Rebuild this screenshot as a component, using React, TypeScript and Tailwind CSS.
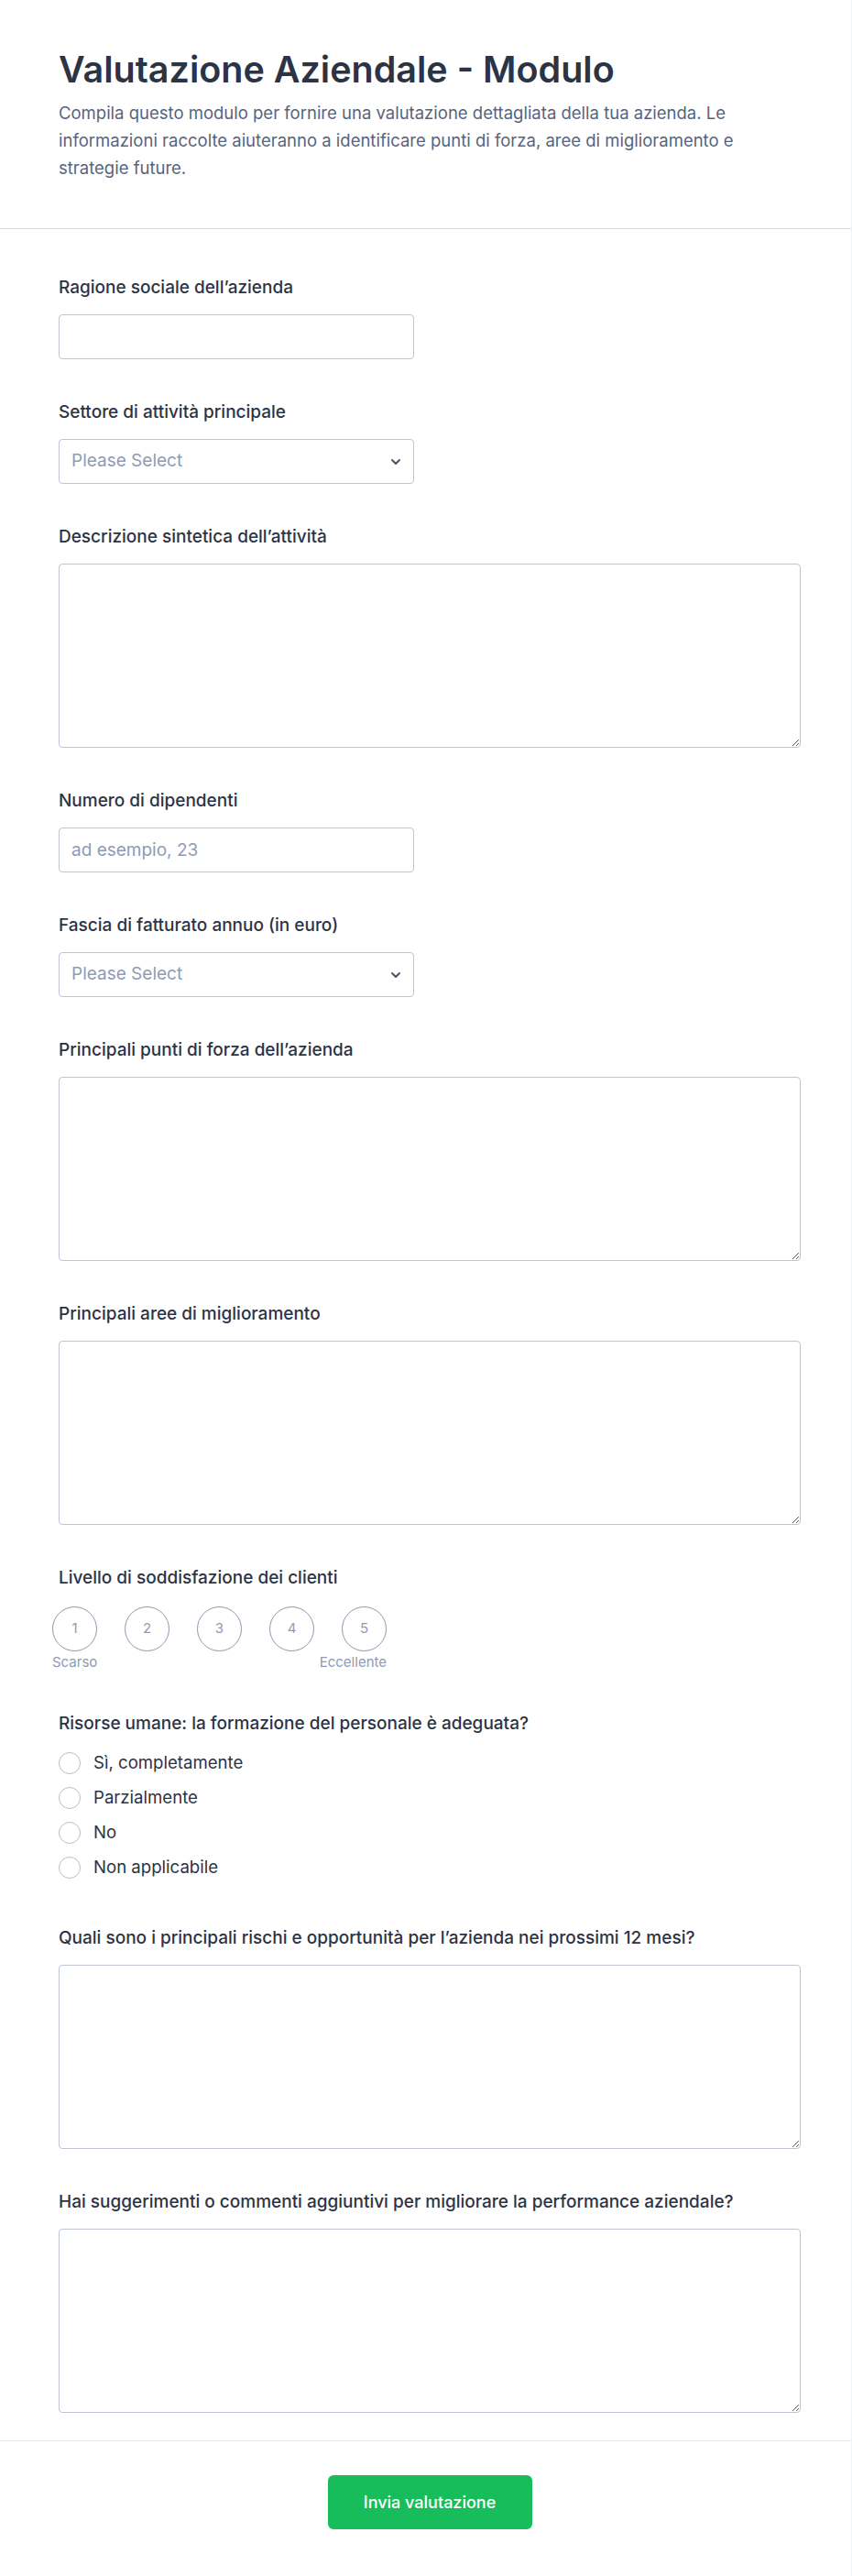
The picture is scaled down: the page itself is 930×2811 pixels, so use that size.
import { ChevronDown } from "lucide-react";

const font = { fontFamily: "Inter, 'Noto Sans', sans-serif" };

const labelCls = "block text-[19px] leading-[27px] font-medium text-[#2c3345] mb-4";
const boxCls =
  "w-[388px] h-[49px] border border-[#bfc5d2] rounded-[4px] bg-white px-[13px] text-[19px] text-[#2c3345] placeholder:text-[#8f9bb3] outline-none";
const areaCls =
  "block w-full h-[201px] border border-[#bfc5d2] rounded-[4px] bg-white px-[13px] py-[10px] text-[19px] text-[#2c3345] outline-none";

function Field({ label, children }: { label: string; children: React.ReactNode }) {
  return (
    <div>
      <label className={labelCls}>{label}</label>
      {children}
    </div>
  );
}

function SelectBox() {
  return (
    <div className="relative w-[388px]">
      <select defaultValue="" className={`${boxCls} appearance-none text-[#8f9bb3]`}>
        <option value="" disabled>
          Please Select
        </option>
      </select>
      <ChevronDown
        className="absolute right-[12px] top-[17px] w-[16px] h-[16px] text-[#4b5568] pointer-events-none"
        strokeWidth={3}
      />
    </div>
  );
}

const radios = ["Sì, completamente", "Parzialmente", "No", "Non applicabile"];

export default function App() {
  return (
    <div className="min-h-[2811px] bg-white border-r border-[#eef0f4]" style={font}>
      <header className="pl-[64px] pr-[55px] pt-[52px] pb-[51px] border-b border-[#d9dbe3]">
        <h1 className="text-[39.5px] leading-[48px] font-semibold text-[#2c3345]">
          Valutazione Aziendale - Modulo
        </h1>
        <p className="mt-[8px] max-w-[805px] text-[18.5px] leading-[30px] text-[#57647e]">
          Compila questo modulo per fornire una valutazione dettagliata della tua azienda. Le
          informazioni raccolte aiuteranno a identificare punti di forza, aree di miglioramento e
          strategie future.
        </p>
      </header>

      <form className="pl-[64px] pr-[55px] pt-[50px] pb-[30px] flex flex-col gap-[44px]">
        <Field label="Ragione sociale dell’azienda">
          <input className={boxCls} />
        </Field>

        <Field label="Settore di attività principale">
          <SelectBox />
        </Field>

        <Field label="Descrizione sintetica dell’attività">
          <textarea className={areaCls} />
        </Field>

        <Field label="Numero di dipendenti">
          <input className={boxCls} placeholder="ad esempio, 23" />
        </Field>

        <Field label="Fascia di fatturato annuo (in euro)">
          <SelectBox />
        </Field>

        <Field label="Principali punti di forza dell’azienda">
          <textarea className={areaCls} />
        </Field>

        <Field label="Principali aree di miglioramento">
          <textarea className={areaCls} />
        </Field>

        <div>
          <label className="block text-[19px] leading-[27px] font-medium text-[#2c3345] mb-[18px]">
            Livello di soddisfazione dei clienti
          </label>
          <div className="w-[365px] -ml-[7px]">
            <div className="flex gap-[30px]">
              {[1, 2, 3, 4, 5].map((n) => (
                <div
                  key={n}
                  className="w-[49px] h-[49px] rounded-full border border-[#8e97ad] flex items-center justify-center text-[15px] text-[#8f9bb3]"
                >
                  {n}
                </div>
              ))}
            </div>
            <div className="mt-[3px] flex justify-between text-[15px] leading-[18px] text-[#8f9bb3]">
              <span>Scarso</span>
              <span>Eccellente</span>
            </div>
          </div>
        </div>

        <div className="mb-[6px]">
          <label className={labelCls}>
            Risorse umane: la formazione del personale è adeguata?
          </label>
          <div className="flex flex-col gap-[11px]">
            {radios.map((r) => (
              <div key={r} className="flex items-center gap-[14px] h-[27px]">
                <span className="w-[24px] h-[24px] rounded-full border border-[#b8bdc9] bg-white" />
                <span className="text-[18.6px] leading-[27px] text-[#2c3345]">{r}</span>
              </div>
            ))}
          </div>
        </div>

        <Field label="Quali sono i principali rischi e opportunità per l’azienda nei prossimi 12 mesi?">
          <textarea className={areaCls} />
        </Field>

        <Field label="Hai suggerimenti o commenti aggiuntivi per migliorare la performance aziendale?">
          <textarea className={areaCls} />
        </Field>
      </form>

      <footer className="border-t border-[#e3e8f4] pl-[64px] pr-[55px] pt-[37px] pb-[50px] flex justify-center">
        <button
          type="button"
          className="w-[223px] h-[59px] rounded-[6px] bg-[#18bd5b] text-white text-[18px] font-medium"
        >
          Invia valutazione
        </button>
      </footer>
    </div>
  );
}
